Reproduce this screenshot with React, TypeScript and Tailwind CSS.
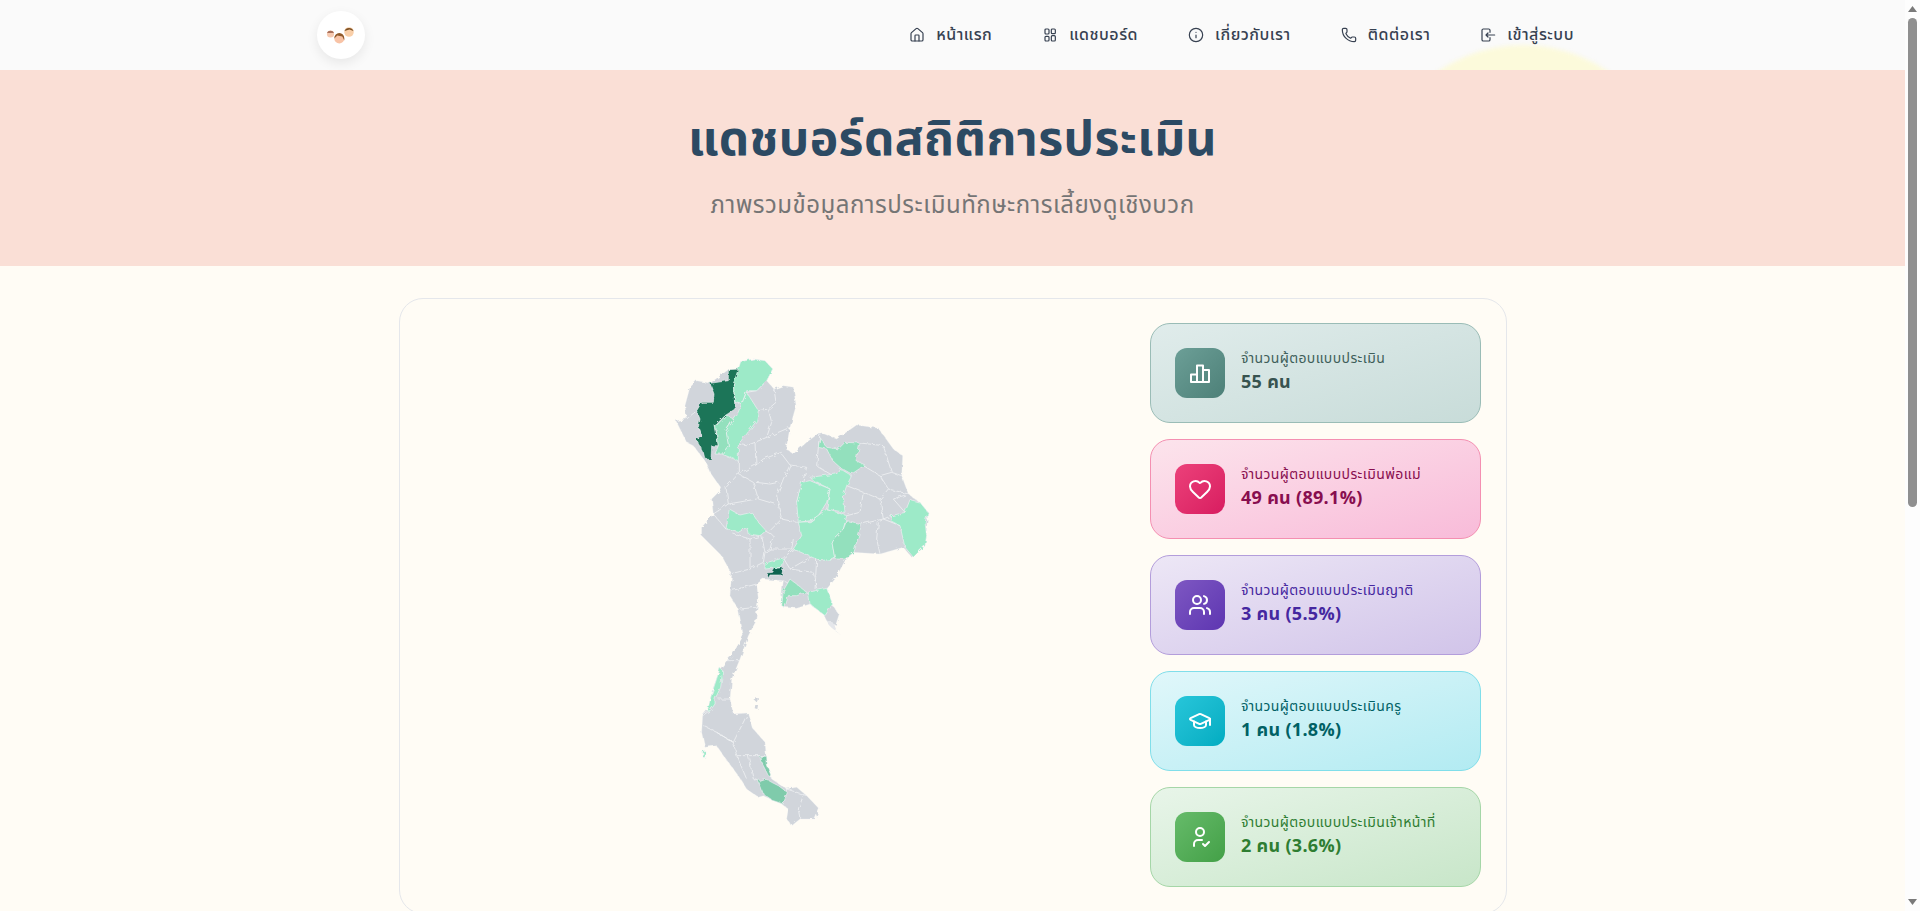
import React from "react";
import { Home, Info, Phone, Heart, Users, GraduationCap } from "lucide-react";

type IconP = { size?: number; strokeWidth?: number };

const DashIcon = ({ size = 16, strokeWidth = 2 }: IconP) => (
  <svg width={size} height={size} viewBox="0 0 24 24" fill="none" stroke="currentColor" strokeWidth={strokeWidth}>
    <rect x="4.5" y="3" width="6" height="7.5" rx="1.5" />
    <rect x="4.500" y="14" width="6" height="7" rx="1.5" />
    <rect x="14" y="3" width="6" height="7" rx="1.5" />
    <rect x="14" y="13" width="6" height="8" rx="1.5" />
  </svg>
);
const LoginIcon = ({ size = 16, strokeWidth = 2 }: IconP) => (
  <svg width={size} height={size} viewBox="0 0 24 24" fill="none" stroke="currentColor" strokeWidth={strokeWidth} strokeLinecap="round" strokeLinejoin="round">
    <path d="M15 8V5a2 2 0 0 0-2-2H5a2 2 0 0 0-2 2v14a2 2 0 0 0 2 2h8a2 2 0 0 0 2-2v-3" />
    <path d="M22 12H9M12 9l-3 3 3 3" />
  </svg>
);
const BarsIcon = ({ size = 24, strokeWidth = 2 }: IconP) => (
  <svg width={size} height={size} viewBox="0 0 24 24" fill="none" stroke="currentColor" strokeWidth={strokeWidth} strokeLinejoin="round">
    <path d="M3 13.500h6V21H3zM9 4.500h6V21H9zM15 9h6v12h-6z" />
  </svg>
);
const UserCheckIcon = ({ size = 24, strokeWidth = 2 }: IconP) => (
  <svg width={size} height={size} viewBox="0 0 24 24" fill="none" stroke="currentColor" strokeWidth={strokeWidth} strokeLinecap="round" strokeLinejoin="round">
    <circle cx="12" cy="7" r="4" />
    <path d="M6 21v-2a4 4 0 0 1 4-4h4" />
    <path d="M15 19l2 2 4-4" />
  </svg>
);

const nav = [
  { t: "หน้าแรก", I: Home },
  { t: "แดชบอร์ด", I: DashIcon },
  { t: "เกี่ยวกับเรา", I: Info },
  { t: "ติดต่อเรา", I: Phone },
  { t: "เข้าสู่ระบบ", I: LoginIcon },
];

const stats = [
  { l: "จำนวนผู้ตอบแบบประเมิน", v: "55 คน", I: BarsIcon, card: "from-[#e0eceb] to-[#c8dcd9] border-[#9abcb6]", icon: "from-[#6c9f97] to-[#4d8078]", lc: "text-[#3f5f5a]", vc: "text-[#37534f]" },
  { l: "จำนวนผู้ตอบแบบประเมินพ่อแม่", v: "49 คน (89.1%)", I: Heart, card: "from-[#fce4ec] to-[#f8bbd9] border-[#f48fb1]", icon: "from-[#ec407a] to-[#d81b60]", lc: "text-[#880e4f]", vc: "text-[#880e4f]" },
  { l: "จำนวนผู้ตอบแบบประเมินญาติ", v: "3 คน (5.5%)", I: Users, card: "from-[#ede7f6] to-[#d1c4e9] border-[#b39ddb]", icon: "from-[#7e57c2] to-[#5e35b1]", lc: "text-[#4527a0]", vc: "text-[#4527a0]" },
  { l: "จำนวนผู้ตอบแบบประเมินครู", v: "1 คน (1.8%)", I: GraduationCap, card: "from-[#e0f7fa] to-[#b2ebf2] border-[#80deea]", icon: "from-[#26c6da] to-[#00acc1]", lc: "text-[#006064]", vc: "text-[#006064]" },
  { l: "จำนวนผู้ตอบแบบประเมินเจ้าหน้าที่", v: "2 คน (3.6%)", I: UserCheckIcon, card: "from-[#e8f5e9] to-[#c8e6c9] border-[#a5d6a7]", icon: "from-[#66bb6a] to-[#43a047]", lc: "text-[#2e7d32]", vc: "text-[#2e7d32]" },
];

const L = "#9deac8", M = "#93e0bd", D = "#1b7558", DD = "#0e6350", S = "#7fcbab";
const sil = "140,125 180,133 235,92 270,90 272,68 310,60 345,65 368,90 350,125 372,150 400,140 430,145 438,200 420,265 408,330 430,345 470,310 510,280 560,300 620,258 685,268 730,330 758,350 755,410 775,465 808,490 834,520 825,620 785,655 760,625 690,645 610,640 585,665 555,720 530,750 548,800 570,830 560,860 530,845 520,825 480,795 440,808 400,805 395,770 400,725 340,720 320,735 325,780 316,850 295,890 270,960 245,1020 240,1080 250,1125 295,1122 310,1170 345,1210 352,1290 365,1320 410,1350 440,1345 470,1370 508,1410 495,1440 450,1440 425,1460 410,1440 415,1410 395,1395 340,1370 325,1375 290,1350 265,1310 235,1270 200,1220 165,1225 155,1180 158,1130 175,1110 185,1060 210,990 230,965 245,950 280,890 265,810 240,770 245,705 215,650 155,590 155,565 190,525 185,480 215,450 180,400 165,365 130,320 110,310 78,245 110,240 105,200 120,145";
const fills: [string, string][] = [
  [D, "180,133 235,125 235,92 270,90 250,135 255,210 225,230 195,260 205,320 185,320 183,362 165,360 160,340 137,300 155,290 145,265 150,240 140,215 155,190 190,190 192,165"],
  [L, "272,68 310,60 345,65 368,90 350,125 320,155 290,155 275,195 255,190 250,135"],
  [L, "290,160 325,215 320,245 290,285 265,315 265,365 215,345 235,320 228,275 260,230 275,195"],
  [M, "228,228 250,240 228,275 235,320 215,345 195,345 205,320 197,262"],
  [M, "510,295 530,325 565,330 585,310 630,312 618,365 645,378 605,405 570,385 548,365 530,330 505,325"],
  [L, "480,415 560,405 568,388 605,410 590,440 580,470 585,520 530,510 540,450 490,425"],
  [L, "455,430 480,425 540,450 530,490 505,530 480,545 445,550 440,490"],
  [L, "445,550 480,548 530,510 590,530 580,570 545,605 555,660 510,665 430,630 455,590"],
  [M, "590,545 635,555 612,640 585,660 555,660 545,605 580,570"],
  [L, "780,482 810,490 834,520 825,550 830,590 825,620 790,655 765,625 750,560 722,545 725,530 765,520"],
  [L, "238,510 270,528 305,520 325,550 348,575 330,590 295,585 290,565 265,580 228,570"],
  [L, "345,672 400,657 398,685 345,690"],
  [DD, "350,702 368,700 375,688 400,686 395,708 360,708 355,718"],
  [M, "420,720 470,760 440,770 415,770 405,805 395,800 400,755"],
  [L, "475,760 530,748 548,795 525,830 480,795"],
  [L, "210,988 218,995 212,1045 195,1080 195,1095 180,1115 172,1115 185,1065"],
  [L, "158,1235 168,1235 168,1258 160,1258"],
  [S, "325,1325 345,1318 365,1330 385,1340 412,1360 400,1395 370,1385 340,1365"],
  [S, "330,1252 350,1252 352,1280 365,1315 355,1310 345,1290 332,1265"],
];
const lines = [
  "140,215 110,240", "290,160 320,155 350,125", "325,215 355,210 378,190 372,150", "355,210 365,250 350,295 315,310 290,320 265,315",
  "420,265 350,295", "315,310 318,378 265,405 228,445", "265,365 265,405", "395,340 340,360 318,378", "395,345 420,378 400,420 380,470 390,520 395,540", "318,430 360,435 385,430",
  "265,405 310,430 325,480 375,495", "228,445 235,495 320,480", "235,495 190,525", "395,540 440,550", "360,575 395,540",
  "420,378 470,385 440,490", "510,280 505,325 500,380 548,410", "630,312 700,320 725,400 690,410 640,380", "690,410 715,450 690,480 640,460 590,440",
  "725,400 755,410", "715,450 775,465", "640,460 630,520 590,530", "690,480 700,540 635,555", "725,530 700,540", "685,550 680,600 690,645",
  "765,520 730,480 775,465", "750,560 700,540", "228,570 190,525", "250,585 300,600 300,690 240,705", "300,600 335,590 345,640 340,670 300,690",
  "345,640 360,630 370,590 345,575", "360,630 425,630 430,600", "400,657 430,630", "400,657 420,690 490,650 510,665", "420,690 490,700 500,750", "500,660 495,750",
  "400,725 470,760", "245,755 320,735", "270,810 320,805", "230,965 270,965", "205,1080 240,1080", "158,1130 185,1110", "160,1160 200,1180 250,1210 290,1130", "200,1180 250,1210 260,1250 345,1250",
  "260,1250 290,1320", "295,1250 310,1320 325,1325", "410,1350 400,1395", "460,1370 445,1410 450,1440", "410,1350 470,1370",
];

function ThaiMap() {
  return (
    <svg viewBox="0 0 900 1530" className="block w-[300px] h-[510px]">
      <defs>
        <filter id="jag" x="-5%" y="-5%" width="110%" height="110%">
          <feTurbulence type="fractalNoise" baseFrequency="0.07" numOctaves="2" seed="4" result="n" />
          <feDisplacementMap in="SourceGraphic" in2="n" scale="13" />
        </filter>
      </defs>
      <g filter="url(#jag)">
        <polygon points={sil} fill="#d1d5db" stroke="#eef0f2" strokeWidth="1" />
        {lines.map((p, i) => (
          <polyline key={i} points={p} fill="none" stroke="#f3f4f6" strokeWidth="2.2" />
        ))}
        {fills.map(([c, p], i) => (
          <polygon key={i} points={p} fill={c} stroke="#f3f4f6" strokeWidth="1.800" />
        ))}
        <polygon points="530,845 548,850 560,880 575,890 540,862" fill="#e5e7eb" />
        <polygon points="316,1075 324,1075 322,1087 314,1085" fill="#d1d5db" />
        <polygon points="316,1098 324,1098 322,1110 314,1108" fill="#d1d5db" />
      </g>
    </svg>
  );
}

function Logo() {
  return (
    <svg viewBox="0 0 48 48" className="w-12 h-12">
      <circle cx="13.500" cy="23" r="3.600" fill="#f6c9b0" />
      <path d="M10 22 a3.600 3 0 0 1 7 0z" fill="#a9705a" />
      <circle cx="22.300" cy="27.500" r="5" fill="#f8c3a6" />
      <path d="M17.300 27.500 a5 5.500 0 0 1 10 0 l0 2 -2 -4 -5 -1z" fill="#8f5a2b" />
      <circle cx="32" cy="21" r="4.800" fill="#f9cfa9" />
      <path d="M27.500 20 a4.800 4.600 0 0 1 9 0 l-4 -1.500z" fill="#7c4f22" />
    </svg>
  );
}

function Scrollbar() {
  return (
    <div className="w-[15px] h-full shrink-0 bg-[#fdfdfd] flex flex-col items-center">
      <svg width="9" height="6" viewBox="0 0 9 6" className="mt-[6px] shrink-0"><path d="M4.500 0L9 6H0z" fill="#7a7a7a" /></svg>
      <div className="mt-[6px] w-[9px] h-[489px] shrink-0 rounded-full bg-[#8f8f8f]" />
      <div className="flex-1" />
      <svg width="9" height="6" viewBox="0 0 9 6" className="mb-[6px] shrink-0"><path d="M0 0h9L4.500 6z" fill="#7a7a7a" /></svg>
    </div>
  );
}

const thai = "font-['Noto_Sans_Thai','IBM_Plex_Sans_Thai','Noto_Sans','Liberation_Sans',sans-serif]";

export default function App() {
  return (
    <div className={`h-screen flex overflow-hidden bg-[#fffcf5] ${thai}`}>
      <div className="flex-1 min-w-0 overflow-hidden">
        <header className="relative h-[70px] overflow-hidden bg-[#fafafa]">
          <div className="absolute left-[1373px] top-[45px] w-[300px] h-[300px] rounded-full bg-[#fcfadb] blur-[2px]" />
          <div className="relative h-full flex items-center justify-between pl-[317px] pr-[331px]">
            <div className="w-12 h-12 rounded-full bg-white shadow-[0_4px_12px_rgba(0,0,0,0.08)]"><Logo /></div>
            <nav className="flex items-center gap-[50px] text-[#374151]">
              {nav.map(({ t, I }) => (
                <span key={t} className="flex items-center gap-[11px] text-[16px] tracking-[0.5px] font-medium leading-6 whitespace-nowrap">
                  <I size={16} strokeWidth={1.8} />
                  {t}
                </span>
              ))}
            </nav>
          </div>
        </header>
        <section className="h-[196px] bg-[#fadfd6] flex flex-col items-center pt-[41px]">
          <h1 className="text-[48px] tracking-[0.45px] leading-[60px] font-bold text-[#2c4a63]">แดชบอร์ดสถิติการประเมิน</h1>
          <p className="mt-[19px] text-[24px] tracking-[0.5px] leading-8 text-[#757575]">ภาพรวมข้อมูลการประเมินทักษะการเลี้ยงดูเชิงบวก</p>
        </section>
        <main className="pt-8">
          <div className="ml-[399px] w-[1108px] h-[616px] rounded-3xl border border-[#e5e7eb] bg-[#fffcf5] flex justify-between pl-[249px] pr-[25px] pt-6">
            <div className="pt-[16px] pl-[1px]"><ThaiMap /></div>
            <div className="w-[331px] flex flex-col gap-4">
              {stats.map(({ l, v, I, card, icon, lc, vc }) => (
                <div key={l} className={`h-[100px] shrink-0 rounded-[20px] border bg-gradient-to-br ${card} flex items-center gap-4 px-6`}>
                  <div className={`w-[50px] h-[50px] rounded-[12px] bg-gradient-to-br ${icon} flex items-center justify-center text-white`}>
                    <I size={24} strokeWidth={2} />
                  </div>
                  <div className="pb-[2px]">
                    <div className={`text-[14px] tracking-[0.38px] leading-[22px] ${lc}`}>{l}</div>
                    <div className={`text-[18px] tracking-[0.3px] leading-[26px] font-bold ${vc}`}>{v}</div>
                  </div>
                </div>
              ))}
            </div>
          </div>
        </main>
      </div>
      <Scrollbar />
    </div>
  );
}
